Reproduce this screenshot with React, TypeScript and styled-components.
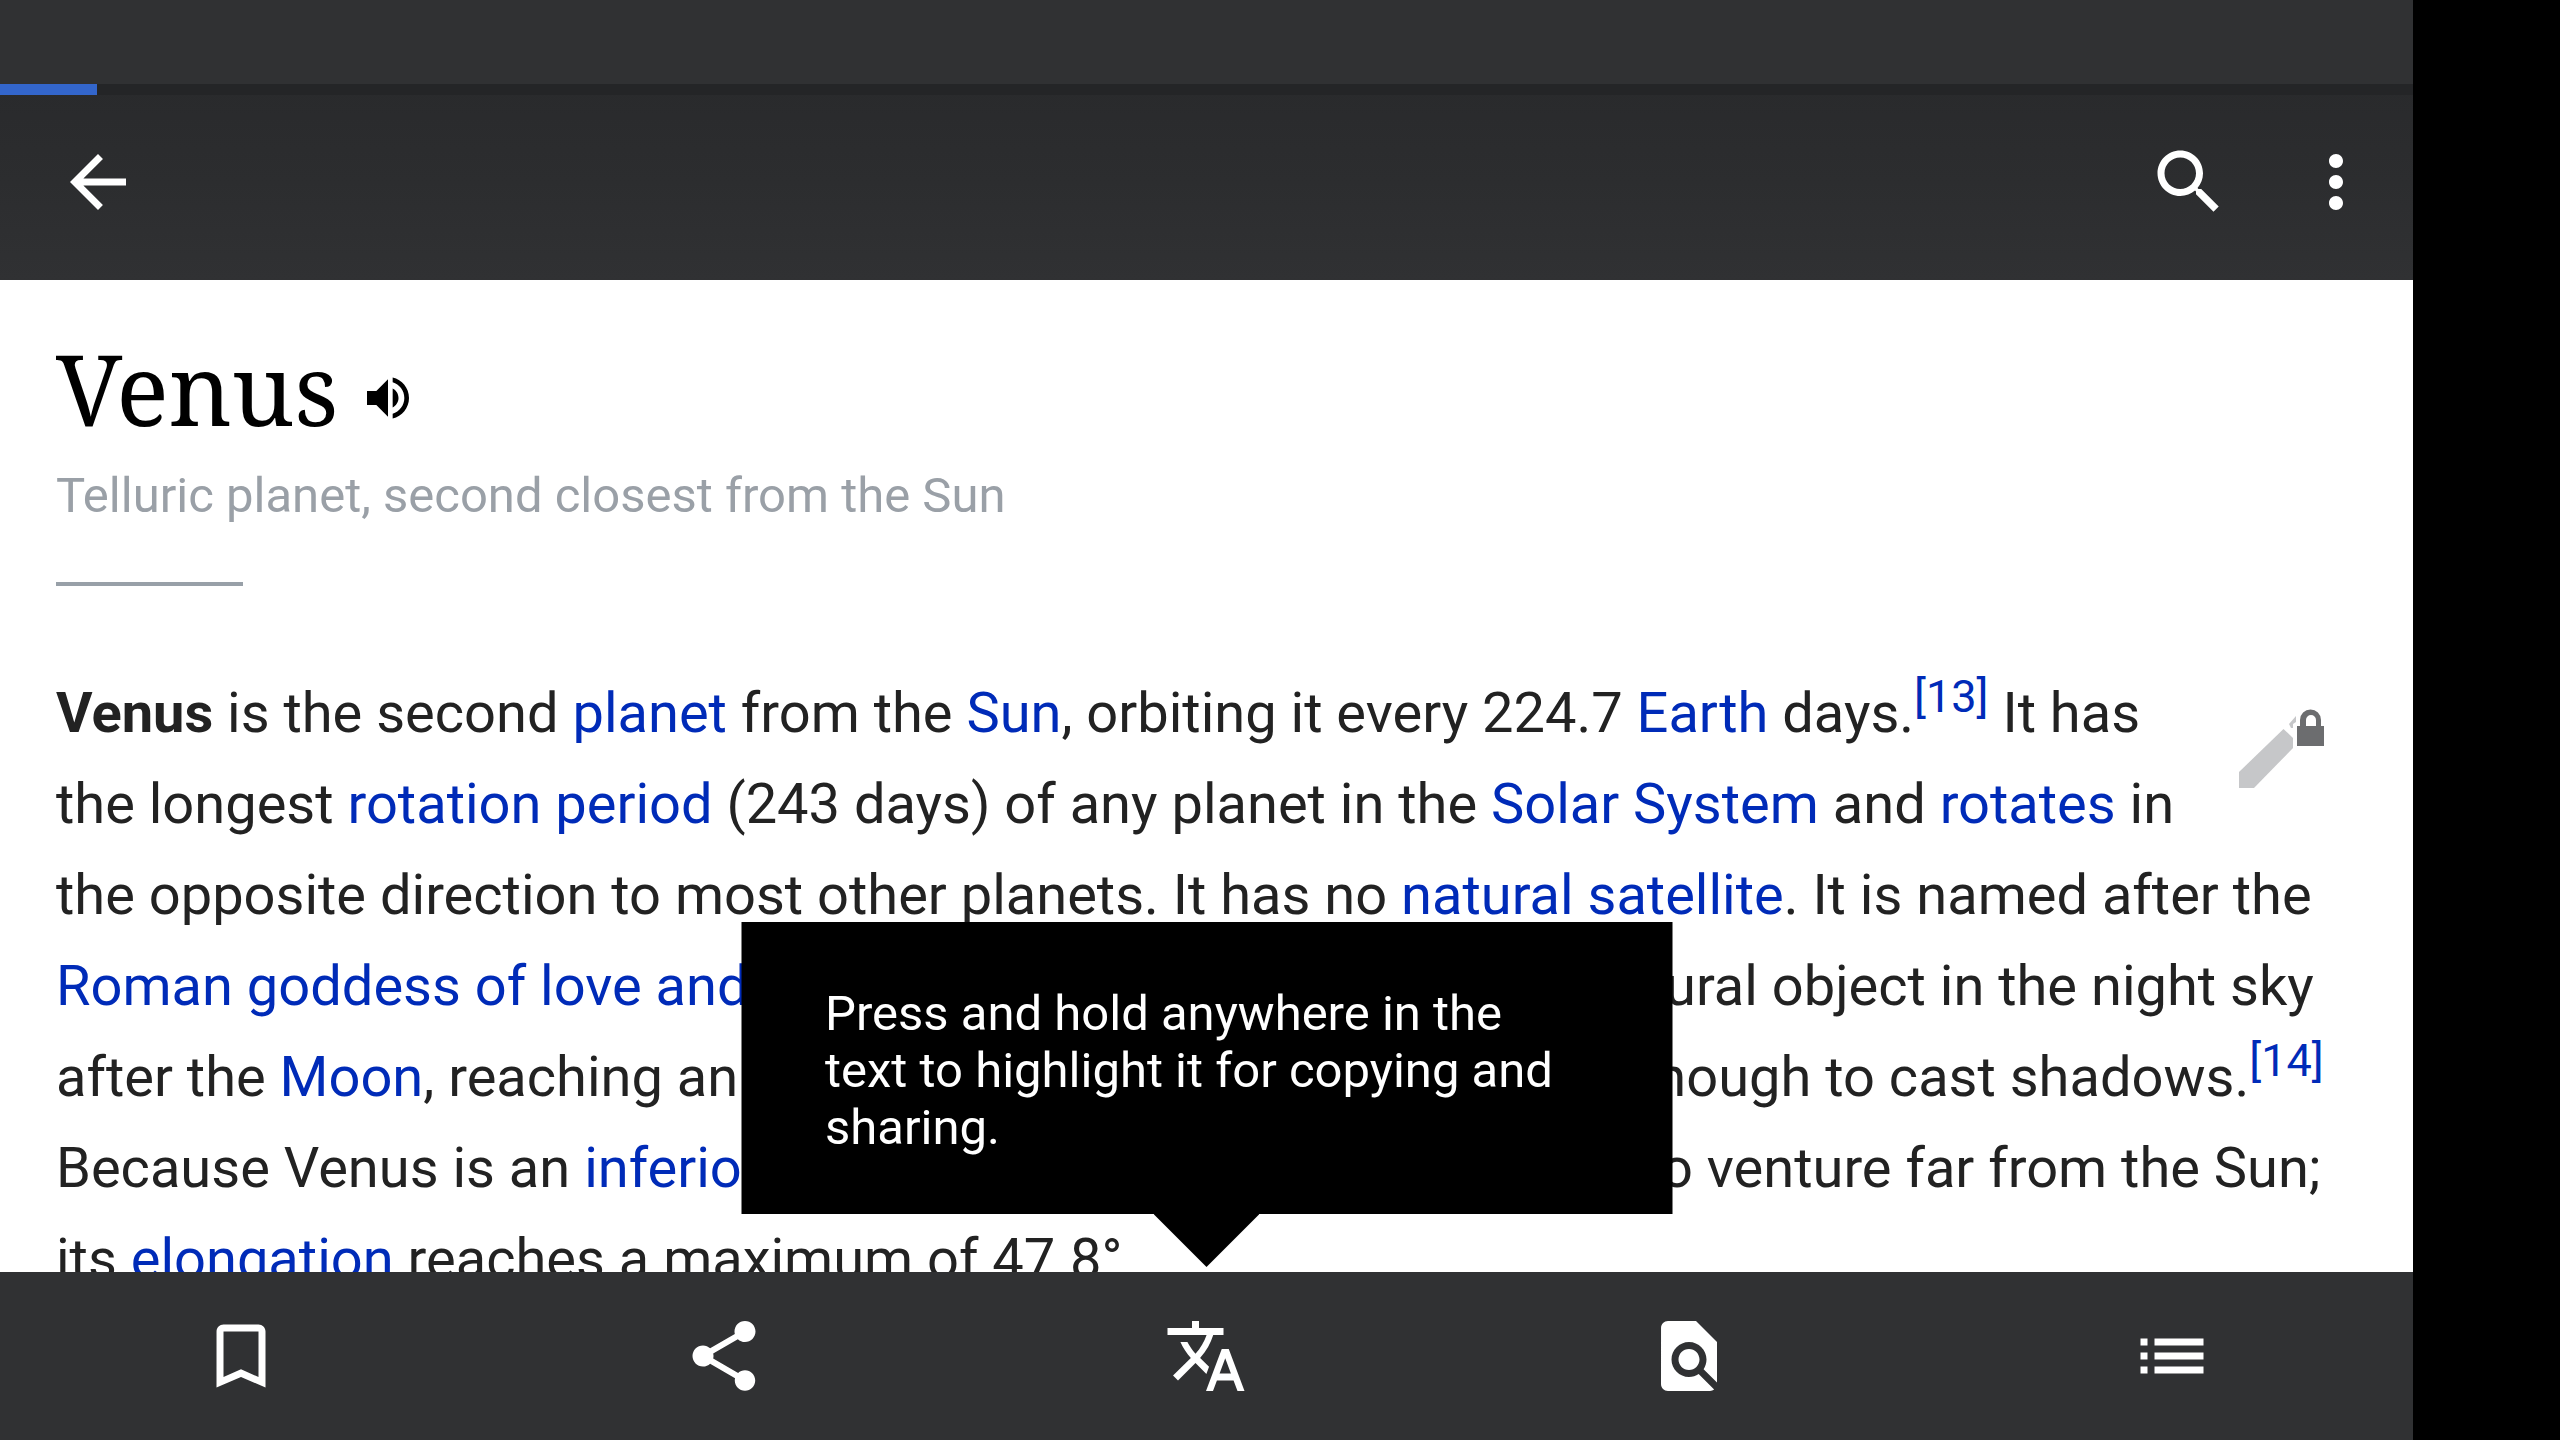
import React from "react";
import styled, { createGlobalStyle } from "styled-components";

const GlobalStyle = createGlobalStyle`
  *, *::before, *::after { box-sizing: border-box; }
  body { margin: 0; background: #000; font-family: Roboto, "Liberation Sans", sans-serif; }
`;

const Device = styled.div`
  display: grid;
  grid-template-columns: minmax(0, 1fr) 147px;
  height: 100vh;
  overflow: hidden;
  background: #000;
`;

const Screen = styled.div`
  display: flex;
  flex-direction: column;
  min-height: 0;
  background: #fff;
`;

const StatusBar = styled.div`
  flex: none;
  height: 84px;
  background: #303133;
`;

const AppBar = styled.header`
  flex: none;
  display: flex;
  flex-direction: column;
  height: 196px;
  background: linear-gradient(#292a2c, #2c2d2f 50%, #303133);
`;

const ProgressTrack = styled.div`
  flex: none;
  height: 11px;
  background: #242527;
`;

const ProgressFill = styled.div`
  height: 100%;
  background: #3366cc;
`;

const Toolbar = styled.div`
  flex: 1;
  display: flex;
  align-items: center;
  padding-bottom: 11px;
`;

const Spacer = styled.div`
  flex: 1;
`;

const IconButton = styled.button<{ $padding: string }>`
  display: flex;
  align-items: center;
  justify-content: center;
  border: 0;
  padding: ${(p) => p.$padding};
  background: none;
  color: #fff;
`;

const Svg = styled.svg<{ $size: number }>`
  display: block;
  flex: none;
  width: ${(p) => p.$size}px;
  height: ${(p) => p.$size}px;
  fill: currentColor;
`;

const Viewport = styled.div`
  position: relative;
  flex: 1;
  min-height: 0;
`;

const Article = styled.main`
  height: 100%;
  overflow: hidden;
  padding: 42px 56px 0;
  color: #222;
`;

const TitleRow = styled.div`
  display: flex;
  align-items: baseline;
  gap: 22px;
`;

const Title = styled.h1`
  margin: 0;
  color: #000;
  font: 400 98px/133px "Noto Serif", "DejaVu Serif Condensed", "DejaVu Serif", serif;
`;

const SpeakButton = styled(IconButton)`
  color: #000;
`;

const Subtitle = styled.p`
  margin: 11px 0 0;
  color: #9aa0a7;
  font-size: 49px;
  line-height: 60px;
`;

const Rule = styled.hr`
  width: 187px;
  height: 4px;
  margin: 56px 0 82px;
  border: 0;
  background: #98a0a8;
`;

const Lead = styled.p`
  margin: 0;
  font-size: 56px;
  line-height: 91px;
`;

const Link = styled.a`
  color: #002bb8;
  text-decoration: none;
`;

const Reference = styled.sup`
  font-size: 45px;
  line-height: 1;
  vertical-align: 20px;
`;

const EditButton = styled.button`
  float: right;
  display: flex;
  justify-content: flex-end;
  width: 168px;
  margin: 31px 0 0;
  border: 0;
  padding: 0 22px 0 0;
  background: none;
`;

const EditDrawing = styled.svg`
  display: block;
  width: 110px;
  height: 100px;
`;

const Tooltip = styled.div`
  position: absolute;
  bottom: 58px;
  left: 50%;
  width: 931px;
  padding: 63px 84px 58px;
  transform: translateX(-50%);
  background: #000;
  color: #fff;
  font-size: 49px;
  line-height: 57px;

  &::after {
    content: "";
    position: absolute;
    top: 100%;
    left: 50%;
    width: 106px;
    height: 53px;
    transform: translateX(-50%);
    background: #000;
    clip-path: polygon(0 0, 100% 0, 50% 100%);
  }
`;

const TabBar = styled.nav`
  flex: none;
  display: grid;
  grid-template-columns: repeat(5, 1fr);
  height: 168px;
  background: #303133;
`;

const icons = {
  back: "M20 11H7.83l5.59-5.59L12 4l-8 8 8 8 1.41-1.41L7.83 13H20v-2z",
  search:
    "M15.5 14h-.79l-.28-.27C15.41 12.59 16 11.11 16 9.5 16 5.91 13.09 3 9.5 3S3 5.91 3 9.5 5.91 16 9.5 16c1.61 0 3.09-.59 4.23-1.57l.27.28v.79l5 4.99L20.49 19l-4.99-5zm-6 0C7.01 14 5 11.99 5 9.5S7.01 5 9.5 5 14 7.01 14 9.5 11.99 14 9.5 14z",
  more: "M12 8c1.1 0 2-.9 2-2s-.9-2-2-2-2 .9-2 2 .9 2 2 2zm0 2c-1.1 0-2 .9-2 2s.9 2 2 2 2-.9 2-2-.9-2-2-2zm0 6c-1.1 0-2 .9-2 2s.9 2 2 2 2-.9 2-2-.9-2-2-2z",
  volume:
    "M3 9v6h4l5 5V4L7 9H3zm13.5 3c0-1.77-1.02-3.29-2.5-4.03v8.05c1.48-.73 2.5-2.25 2.5-4.02zM14 3.23v2.06c2.89.86 5 3.54 5 6.71s-2.11 5.85-5 6.71v2.06c4.01-.91 7-4.49 7-8.77s-2.99-7.86-7-8.77z",
  bookmark:
    "M17 3H7c-1.1 0-1.99.9-1.99 2L5 21l7-3 7 3V5c0-1.1-.9-2-2-2zm0 15l-5-2.18L7 18V5h10v13z",
  share:
    "M18 16.08c-.76 0-1.44.3-1.96.77L8.91 12.7c.05-.23.09-.46.09-.7s-.04-.47-.09-.7l7.05-4.11c.54.5 1.25.81 2.04.81 1.66 0 3-1.34 3-3s-1.34-3-3-3-3 1.34-3 3c0 .24.04.47.09.7L8.04 9.81C7.5 9.31 6.79 9 6 9c-1.66 0-3 1.34-3 3s1.34 3 3 3c.79 0 1.5-.31 2.04-.81l7.12 4.16c-.05.21-.08.43-.08.65 0 1.61 1.31 2.92 2.92 2.92 1.61 0 2.92-1.31 2.92-2.92s-1.31-2.92-2.92-2.92z",
  translate:
    "M12.87 15.07l-2.54-2.51.03-.03c1.74-1.94 2.98-4.17 3.71-6.53H17V4h-7V2H8v2H1v1.99h11.17C11.5 7.92 10.44 9.75 9 11.35 8.07 10.32 7.3 9.19 6.69 8h-2c.73 1.63 1.73 3.17 2.98 4.56l-5.09 5.02L4 19l5-5 3.11 3.11.76-2.04zM18.5 10h-2L12 22h2l1.12-3h4.75L21 22h2l-4.5-12zm-2.62 7l1.62-4.33L19.12 17h-3.24z",
  find: "M20 19.59V8l-6-6H6c-1.1 0-1.99.9-1.99 2L4 20c0 1.1.89 2 1.99 2H18c.45 0 .85-.15 1.19-.4l-4.43-4.43c-.8.52-1.74.83-2.76.83-2.76 0-5-2.24-5-5s2.24-5 5-5 5 2.24 5 5c0 1.02-.31 1.96-.83 2.75L20 19.59zM9 13c0 1.66 1.34 3 3 3s3-1.34 3-3-1.34-3-3-3-3 1.34-3 3z",
  contents: "M3 7h2v2H3zM7 7h14v2H7zM3 11h2v2H3zM7 11h14v2H7zM3 15h2v2H3zM7 15h14v2H7z",
};

type IconName = keyof typeof icons;

function Icon({ name, size = 84 }: { name: IconName; size?: number }) {
  return (
    <Svg $size={size} viewBox="0 0 24 24" aria-hidden="true">
      <path d={icons[name]} />
    </Svg>
  );
}

const tabs: { icon: IconName; label: string }[] = [
  { icon: "bookmark", label: "Save" },
  { icon: "share", label: "Share" },
  { icon: "translate", label: "Change language" },
  { icon: "find", label: "Find in page" },
  { icon: "contents", label: "Contents" },
];

const progress = 4;

export default function App() {
  return (
    <>
      <GlobalStyle />
      <Device>
        <Screen>
          <StatusBar />
          <AppBar>
            <ProgressTrack role="progressbar" aria-label="Page loading" aria-valuenow={progress}>
              <ProgressFill style={{ width: `${progress}%` }} />
            </ProgressTrack>
            <Toolbar>
              <IconButton $padding="42px 56px" aria-label="Back">
                <Icon name="back" />
              </IconButton>
              <Spacer />
              <IconButton $padding="42px" aria-label="Search">
                <Icon name="search" />
              </IconButton>
              <IconButton $padding="42px 35px 42px 21px" aria-label="More options">
                <Icon name="more" />
              </IconButton>
            </Toolbar>
          </AppBar>
          <Viewport>
            <Article>
              <TitleRow>
                <Title>Venus</Title>
                <SpeakButton $padding="0" aria-label="Pronounce title">
                  <Icon name="volume" size={56} />
                </SpeakButton>
              </TitleRow>
              <Subtitle>Telluric planet, second closest from the Sun</Subtitle>
              <Rule />
              <EditButton aria-label="Edit (protected page)">
                <EditDrawing viewBox="0 0 110 100" aria-hidden="true">
                  <path fill="#c6c7c9" d="M14 89V73L58.500 30l9.500 9v10L29 89z" />
                  <path fill="#c6c7c9" d="M64 25l7-8v6l-3 2v4h-2z" />
                  <path
                    fill="#6c6d6f"
                    fillRule="evenodd"
                    d="M72 27h3v-6a10.500 10.500 0 0 1 21 0v6h3v20H72zM81 27h10v-6a5 5 0 0 0-10 0z"
                  />
                </EditDrawing>
              </EditButton>
              <Lead>
                <b>Venus</b> is the second <Link href="#planet">planet</Link> from the{" "}
                <Link href="#sun">Sun</Link>, orbiting it every 224.7 <Link href="#earth">Earth</Link> days.
                <Reference>
                  <Link href="#cite-13">[13]</Link>
                </Reference>{" "}
                It has the longest <Link href="#rotation-period">rotation period</Link> (243 days) of any planet in
                the <Link href="#solar-system">Solar System</Link> and <Link href="#rotates">rotates</Link> in the
                opposite direction to most other planets. It has no{" "}
                <Link href="#natural-satellite">natural satellite</Link>. It is named after the{" "}
                <Link href="#goddess">Roman goddess of love and beauty</Link>. It is the second-brightest natural
                object in the night sky after the <Link href="#moon">Moon</Link>, reaching an{" "}
                <Link href="#magnitude">apparent magnitude</Link> of −4.6, bright enough to cast shadows.
                <Reference>
                  <Link href="#cite-14">[14]</Link>
                </Reference>{" "}
                Because Venus is an <Link href="#inferior-planet">inferior planet</Link> from Earth, it never appears
                to venture far from the Sun; its <Link href="#elongation">elongation</Link> reaches a maximum of
                47.8°
              </Lead>
            </Article>
            <Tooltip role="tooltip">
              Press and hold anywhere in the text to highlight it for copying and sharing.
            </Tooltip>
          </Viewport>
          <TabBar>
            {tabs.map((tab) => (
              <IconButton key={tab.icon} $padding="0" aria-label={tab.label}>
                <Icon name={tab.icon} />
              </IconButton>
            ))}
          </TabBar>
        </Screen>
      </Device>
    </>
  );
}
